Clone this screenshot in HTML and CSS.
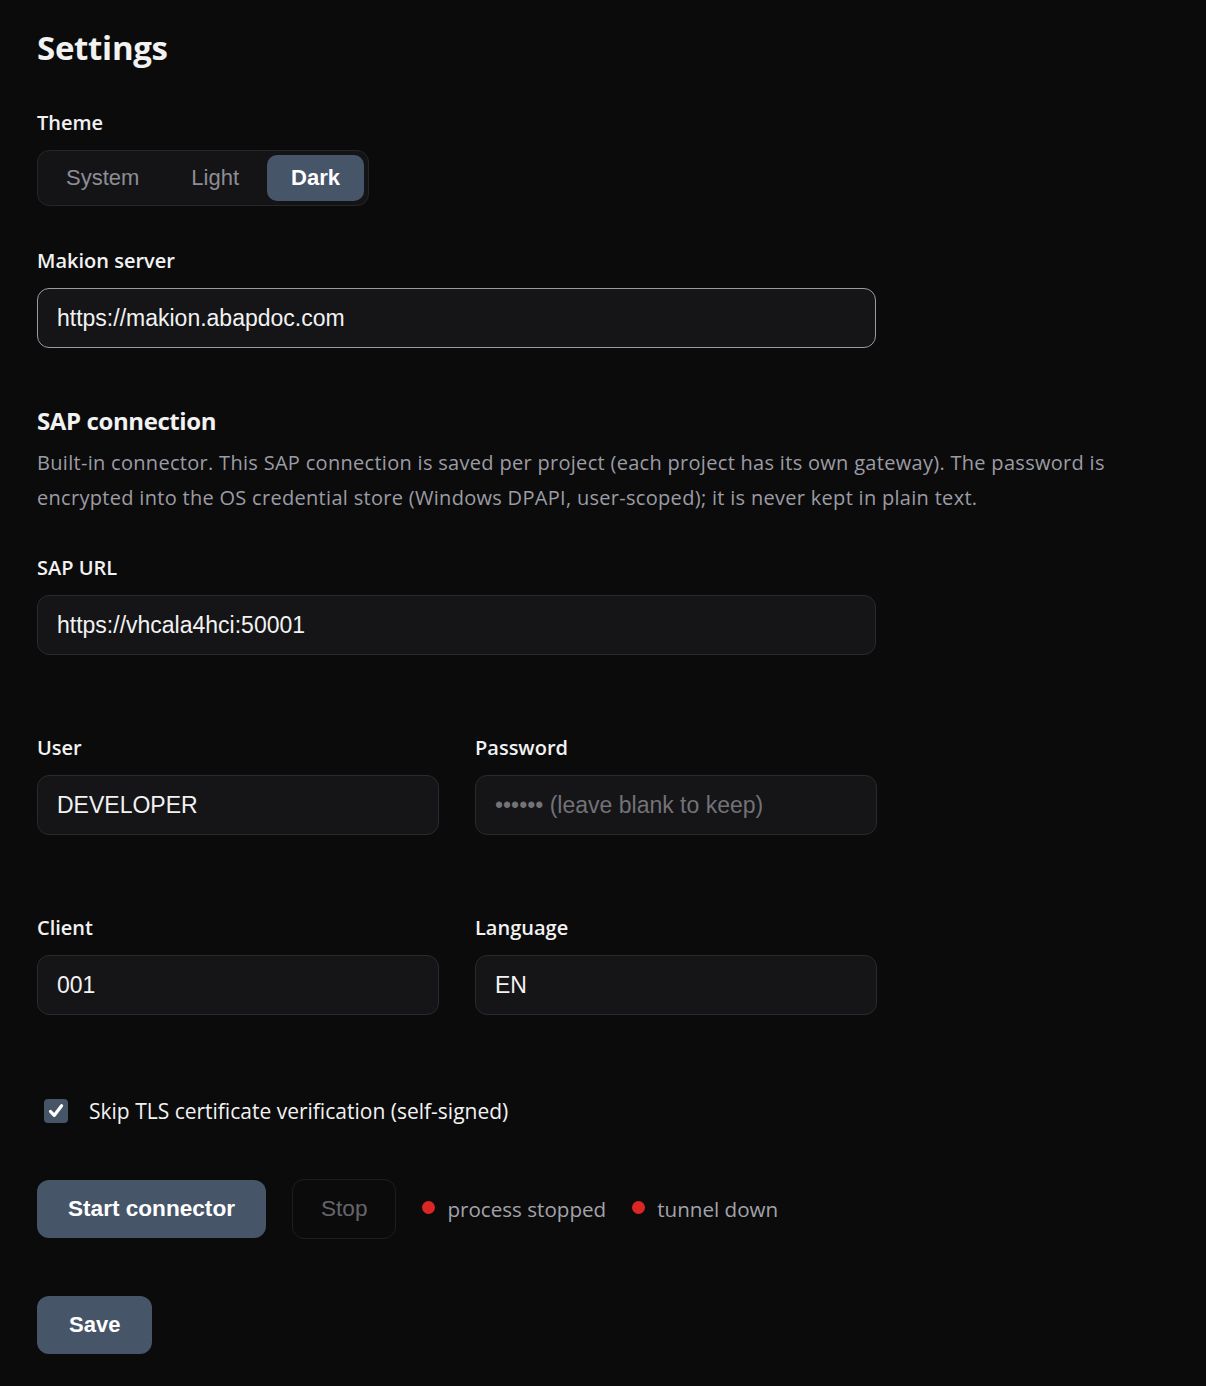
FILE: index.html
```html
<!DOCTYPE html>
<html>
    <head>
        <meta charset="utf-8">
        <title>Settings</title>
        <link rel="stylesheet" href="styles.css">
    </head>
    <body>
        <div class="page">
            <h1 class="title">Settings</h1>

            <div class="field theme-field">
                <div class="label">Theme</div>
                <div class="segmented">
                    <button class="seg">System</button>
                    <button class="seg">Light</button>
                    <button class="seg active">Dark</button>
                </div>
            </div>

            <div class="field server-field">
                <div class="label">Makion server</div>
                <input class="input focused" type="text" value="https://makion.abapdoc.com">
            </div>

            <h2 class="section">SAP connection</h2>
            <p class="desc">Built-in connector. This SAP connection is saved per project (each project has its own gateway). The password is encrypted into the OS credential store (Windows DPAPI, user-scoped); it is never kept in plain text.</p>

            <div class="field url-field">
                <div class="label">SAP URL</div>
                <input class="input" type="text" value="https://vhcala4hci:50001">
            </div>

            <div class="row">
                <div class="field">
                    <div class="label">User</div>
                    <input class="input" type="text" value="DEVELOPER">
                </div>
                <div class="field">
                    <div class="label">Password</div>
                    <input class="input" type="password" placeholder="•••••• (leave blank to keep)">
                </div>
            </div>

            <div class="row">
                <div class="field">
                    <div class="label">Client</div>
                    <input class="input" type="text" value="001">
                </div>
                <div class="field">
                    <div class="label">Language</div>
                    <input class="input" type="text" value="EN">
                </div>
            </div>

            <label class="check">
                <span class="box">
                    <svg width="18" height="18" viewBox="0 0 18 18"><path d="M3.5 9.5 L7.2 13.4 L14.6 3.8" fill="none" stroke="#fff" stroke-width="3.2" stroke-linecap="round" stroke-linejoin="round"/></svg>
                </span>
                Skip TLS certificate verification (self-signed)
            </label>

            <div class="actions">
                <button class="btn primary">Start connector</button>
                <button class="btn ghost">Stop</button>
                <span class="status"><span class="dot"></span>process stopped</span>
                <span class="status"><span class="dot"></span>tunnel down</span>
            </div>

            <button class="btn primary save">Save</button>
        </div>
    </body>
</html>
```

FILE: styles.css
```css
*{
    box-sizing: border-box;
}
body{
    margin: 0;
    background-color: #0b0b0c;
    color: #f2f2f2;
    font-family: "Open Sans", Lato, sans-serif;
}
.page{
    padding: 29px 37px 40px 37px;
    max-width: 1206px;
}
.title{
    margin: 0;
    font-size: 33px;
    line-height: 38px;
    font-weight: 700;
    letter-spacing: -0.3px;
}
.label{
    font-size: 20px;
    line-height: 28px;
    font-weight: 600;
    margin-bottom: 13px;
}
.theme-field{
    margin-top: 42px;
}
.segmented{
    display: inline-flex;
    gap: 4px;
    padding: 4px;
    height: 56px;
    border: 1px solid #26262a;
    border-radius: 12px;
    background-color: #141417;
}
.seg{
    border: none;
    background: none;
    padding: 0 24px;
    border-radius: 10px;
    font-family: "Liberation Sans", Arial, sans-serif;
    font-size: 22px;
    color: #8d8d96;
}
.seg.active{
    background-color: #475569;
    color: #fff;
    font-weight: 700;
}
.server-field{
    margin-top: 41px;
}
.input{
    display: block;
    width: 100%;
    height: 60px;
    padding: 0 19px;
    border: 1px solid #2a2a2e;
    border-radius: 12px;
    background-color: #151518;
    color: #f2f2f2;
    font-family: "Liberation Sans", Arial, sans-serif;
    font-size: 23px;
    outline: none;
}
.input.focused{
    border-color: #9a9aa0;
}
.input::placeholder{
    color: #727277;
}
.field{
    width: 839px;
}
.section{
    margin: 57px 0 0 0;
    font-size: 24px;
    line-height: 32px;
    font-weight: 700;
    letter-spacing: -0.4px;
}
.desc{
    margin: 8px 0 0 0;
    font-size: 20px;
    line-height: 35px;
    letter-spacing: 0.3px;
    color: #9c9ca4;
}
.url-field{
    margin-top: 39px;
}
.row{
    display: grid;
    grid-template-columns: 402px 402px;
    gap: 36px;
    margin-top: 79px;
    width: 839px;
}
.row .field{
    width: auto;
}
.check{
    display: flex;
    align-items: center;
    gap: 21px;
    margin-top: 82px;
    padding-left: 7px;
    font-size: 21px;
    color: #f2f2f2;
}
.box{
    width: 24px;
    height: 24px;
    border-radius: 4px;
    background-color: #475569;
    display: flex;
    align-items: center;
    justify-content: center;
}
.actions{
    display: flex;
    align-items: center;
    margin-top: 54px;
}
.btn{
    height: 58px;
    padding: 0 31px;
    border-radius: 12px;
    font-family: "Liberation Sans", Arial, sans-serif;
    font-size: 22.6px;
}
.primary{
    border: none;
    background-color: #475569;
    color: #fff;
    font-weight: 700;
}
.ghost{
    height: 60px;
    margin-left: 26px;
    padding: 0 28px;
    border: 1px solid #1e1e21;
    background-color: #0b0b0c;
    color: #66666a;
}
.status{
    display: inline-flex;
    align-items: center;
    gap: 12px;
    margin-left: 26px;
    font-size: 20.6px;
    color: #a3a3ab;
}
.dot{
    width: 13px;
    height: 13px;
    border-radius: 50%;
    background-color: #dc2626;
    margin-top: -4px;
}
.save{
    display: block;
    margin-top: 57px;
    padding: 0 32px;
    font-size: 22px;
}
```
